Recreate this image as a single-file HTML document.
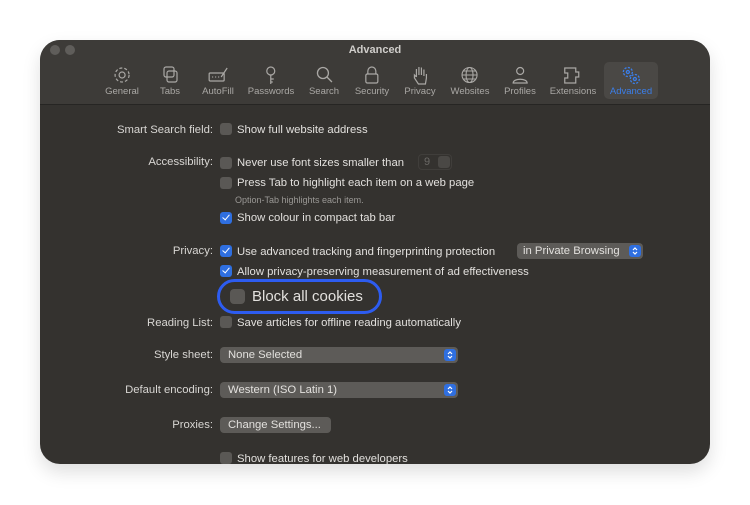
<!DOCTYPE html>
<html><head><style>
*{margin:0;padding:0;box-sizing:border-box}
body{width:750px;height:505px;background:#fff;position:relative;overflow:hidden;font-family:"Liberation Sans",sans-serif;color:#dedcda}
.win{position:absolute;left:40px;top:40px;width:670px;height:424px;border-radius:20px;background:#34322f;overflow:hidden;box-shadow:0 8px 18px rgba(0,0,0,.13)}
.bar{position:absolute;left:0;top:0;width:670px;height:65px;background:#3d3b38;border-bottom:1px solid #262523}
.title{position:absolute;top:4px;width:100%;text-align:center;font-size:11px;font-weight:bold;color:#cfcdca}
.dot{position:absolute;top:5px;width:10px;height:10px;border-radius:50%;background:#5f5d5a}
.tab{position:absolute;top:25px;text-align:center;font-size:9.5px;color:#aaa8a5;transform:translateX(-50%)}
.tab svg{display:block;margin:0 auto 1px;width:22px;height:20px}
.sel{position:absolute;left:564px;top:22px;width:54px;height:37px;background:#4a4845;border-radius:5px}
.t{position:absolute;font-size:11.3px;white-space:nowrap;color:#e2e0dd;margin-top:1px}
.l{position:absolute;font-size:11.3px;text-align:right;width:173px;left:0;white-space:nowrap;color:#d8d6d3;margin-top:1px}
.cb{position:absolute;width:12px;height:12px;border-radius:3px;background:#5a5855}
.cb.on{background:#2f6fe0}
.cb.on::after{content:"";position:absolute;left:3.5px;top:1px;width:3px;height:6px;border:solid #fff;border-width:0 1.6px 1.6px 0;transform:rotate(40deg)}
.pop{position:absolute;height:16px;background:#5d5b58;border-radius:4px;font-size:11.3px;padding:2px 8px 0;line-height:13px;color:#e2e0dd}
.arr{position:absolute;right:2px;top:2px;width:12px;height:12px;background:#2f6fe0;border-radius:3px}
.arr svg{display:block;width:12px;height:12px}
</style></head><body>
<div class="win">
<div class="bar">
<div class="dot" style="left:10px"></div><div class="dot" style="left:25px"></div>
<div class="title">Advanced</div>
<div class="sel"></div>
<div class="tab" style="left:82px"><svg viewBox="0 0 22 20" fill="none" stroke="#aaa8a5" stroke-width="1.2"><circle cx="11" cy="10" r="3"/><circle cx="11" cy="10" r="7" stroke-dasharray="3 2"/></svg>General</div>
<div class="tab" style="left:130px"><svg viewBox="0 0 22 20" fill="none" stroke="#aaa8a5" stroke-width="1.2"><rect x="5" y="2" width="10" height="10" rx="2"/><rect x="8" y="6" width="10" height="11" rx="2"/></svg>Tabs</div>
<div class="tab" style="left:178px"><svg viewBox="0 0 22 20" fill="none" stroke="#aaa8a5" stroke-width="1.2"><rect x="2" y="8" width="15" height="8" rx="1"/><path d="M14 12L20 3"/><path d="M5 12h1M8 12h1M11 12h1"/></svg>AutoFill</div>
<div class="tab" style="left:231px"><svg viewBox="0 0 22 20" fill="none" stroke="#aaa8a5" stroke-width="1.2"><circle cx="11" cy="6" r="4"/><path d="M11 10v9M11 14h3M11 17h2"/></svg>Passwords</div>
<div class="tab" style="left:284px"><svg viewBox="0 0 22 20" fill="none" stroke="#aaa8a5" stroke-width="1.3"><circle cx="10" cy="8" r="5.5"/><path d="M14 12l5 5"/></svg>Search</div>
<div class="tab" style="left:332px"><svg viewBox="0 0 22 20" fill="none" stroke="#aaa8a5" stroke-width="1.2"><path d="M7 9V6a4 4 0 018 0v3"/><rect x="5" y="9" width="12" height="9" rx="1.5"/></svg>Security</div>
<div class="tab" style="left:380px"><svg viewBox="0 0 22 20" fill="none" stroke="#aaa8a5" stroke-width="1.2"><path d="M7 12V4M9.5 10V2M12 10V2.5M14.5 11V4.5M7 12l-2-2v3l4 6h7l1-6v-4"/></svg>Privacy</div>
<div class="tab" style="left:430px"><svg viewBox="0 0 22 20" fill="none" stroke="#aaa8a5" stroke-width="1.1"><circle cx="11" cy="10" r="7.5"/><ellipse cx="11" cy="10" rx="3.5" ry="7.5"/><path d="M3.5 10h15M5 6h12M5 14h12"/></svg>Websites</div>
<div class="tab" style="left:480px"><svg viewBox="0 0 22 20" fill="none" stroke="#aaa8a5" stroke-width="1.2"><circle cx="11" cy="6" r="3.5"/><path d="M4 18c0-5 14-5 14 0z"/></svg>Profiles</div>
<div class="tab" style="left:533px"><svg viewBox="0 0 22 20" fill="none" stroke="#aaa8a5" stroke-width="1.2"><path d="M3 3h11v4h3v5h-3v6H3v-5h3V8H3z"/></svg>Extensions</div>
<div class="tab" style="left:591px;color:#3b7ee8"><svg viewBox="0 0 22 20" fill="none" stroke="#3b7ee8" stroke-width="1.3"><circle cx="8" cy="7" r="4.5" stroke-dasharray="2.2 1.3"/><circle cx="8" cy="7" r="1.5"/><circle cx="15" cy="14" r="4.5" stroke-dasharray="2.2 1.3"/><circle cx="15" cy="14" r="1.5"/></svg>Advanced</div>
</div>

<div class="l" style="top:83px">Smart Search field:</div>
<div class="cb" style="left:180px;top:83px"></div><div class="t" style="left:197px;top:83px">Show full website address</div>

<div class="l" style="top:115px">Accessibility:</div>
<div class="cb" style="left:180px;top:117px"></div><div class="t" style="left:197px;top:116px">Never use font sizes smaller than</div>
<div style="position:absolute;left:378px;top:114px;width:34px;height:16px;border:1px solid #403e3b;border-radius:4px;font-size:11px;color:#6a6865;padding:1px 5px">9<span style="position:absolute;right:1px;top:1px;width:12px;height:12px;background:#4a4845;border-radius:3px"></span></div>
<div class="cb" style="left:180px;top:137px"></div><div class="t" style="left:197px;top:136px">Press Tab to highlight each item on a web page</div>
<div class="t" style="left:195px;top:154px;font-size:9px;color:#9a9895">Option-Tab highlights each item.</div>
<div class="cb on" style="left:180px;top:172px"></div><div class="t" style="left:197px;top:171px">Show colour in compact tab bar</div>

<div class="l" style="top:204px">Privacy:</div>
<div class="cb on" style="left:180px;top:205px"></div><div class="t" style="left:197px;top:205px">Use advanced tracking and fingerprinting protection</div>
<div class="pop" style="left:477px;top:203px;width:126px;padding-left:6px">in Private Browsing<div class="arr"><svg viewBox="0 0 12 12" fill="none" stroke="#fff" stroke-width="1.2"><path d="M4 5l2-2 2 2M4 7l2 2 2-2"/></svg></div></div>
<div class="cb on" style="left:180px;top:225px"></div><div class="t" style="left:197px;top:225px">Allow privacy-preserving measurement of ad effectiveness</div>

<div style="position:absolute;left:177px;top:239px;width:165px;height:35px;border:3px solid #2d5cf0;border-radius:18px"></div>
<div class="cb" style="left:190px;top:249px;width:15px;height:15px;border-radius:4px"></div>
<div class="t" style="left:212px;top:247px;font-size:15px">Block all cookies</div>

<div class="l" style="top:276px">Reading List:</div>
<div class="cb" style="left:180px;top:276px"></div><div class="t" style="left:197px;top:276px">Save articles for offline reading automatically</div>

<div class="l" style="top:308px">Style sheet:</div>
<div class="pop" style="left:180px;top:307px;width:238px">None Selected<div class="arr"><svg viewBox="0 0 12 12" fill="none" stroke="#fff" stroke-width="1.2"><path d="M4 5l2-2 2 2M4 7l2 2 2-2"/></svg></div></div>

<div class="l" style="top:343px">Default encoding:</div>
<div class="pop" style="left:180px;top:342px;width:238px">Western (ISO Latin 1)<div class="arr"><svg viewBox="0 0 12 12" fill="none" stroke="#fff" stroke-width="1.2"><path d="M4 5l2-2 2 2M4 7l2 2 2-2"/></svg></div></div>

<div class="l" style="top:378px">Proxies:</div>
<div class="pop" style="left:180px;top:377px;width:111px;padding-left:8px">Change Settings...</div>

<div class="cb" style="left:180px;top:412px"></div><div class="t" style="left:197px;top:412px">Show features for web developers</div>
</div>
</body></html>
